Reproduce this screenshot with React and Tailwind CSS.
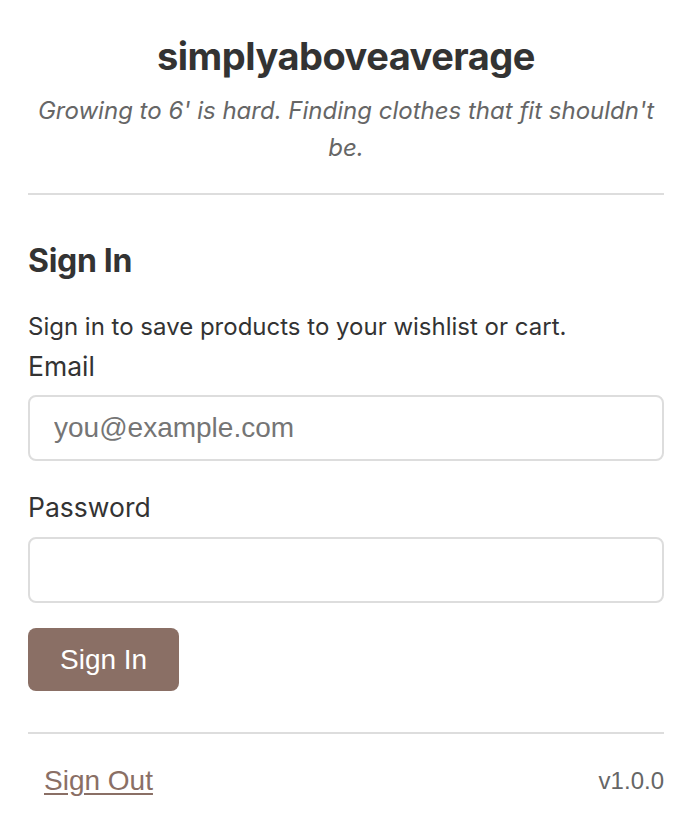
export default function App() {
  return (
    <div className="min-h-screen bg-white pl-7 pr-[26px] text-[#333] font-['Inter','Noto_Sans',sans-serif]">
      <header className="pt-[33px] pb-[27px] text-center border-b-2 border-[#ddd]">
        <h1 className="text-[38px] leading-[46px] font-bold tracking-[-0.5px]">simplyaboveaverage</h1>
        <p className="mt-[13px] text-[24px] leading-[37px] italic text-[#666]">
          Growing to 6' is hard. Finding clothes that fit shouldn't be.
        </p>
      </header>

      <main className="pt-[47px]">
        <h2 className="text-[32px] leading-[38px] font-bold tracking-[-0.3px]">Sign In</h2>
        <p className="mt-[31px] text-[24px] leading-[32px]">Sign in to save products to your wishlist or cart.</p>

        <form className="mt-[6px]" onSubmit={e => e.preventDefault()}>
          <label className="block text-[26.5px] leading-[34px]">Email</label>
          <input
            type="email"
            placeholder="you@example.com"
            className="mt-[12px] block w-full h-[66px] rounded-lg border-2 border-[#ddd] px-[24px] text-[28px] font-['Liberation_Sans',Arial,sans-serif] placeholder:text-[#757575] outline-none"
          />
          <label className="block mt-[29px] text-[26.5px] leading-[34px]">Password</label>
          <input
            type="password"
            className="mt-[13px] block w-full h-[66px] rounded-lg border-2 border-[#ddd] px-[24px] text-[28px] font-['Liberation_Sans',Arial,sans-serif] outline-none"
          />
          <button className="mt-[25px] h-[63px] px-[32px] rounded-lg bg-[#8a6f65] text-white text-[28px] font-['Liberation_Sans',Arial,sans-serif]">
            Sign In
          </button>
        </form>
      </main>

      <footer className="mt-[41px] border-t-2 border-[#ddd] pt-[30px] flex items-center justify-between font-['Liberation_Sans',Arial,sans-serif]">
        <a href="#" className="ml-4 text-[28px] leading-[34px] underline underline-offset-[3px] text-[#8a6f65]">Sign Out</a>
        <span className="text-[24px] leading-[34px] text-[#666]">v1.0.0</span>
      </footer>
    </div>
  );
}
